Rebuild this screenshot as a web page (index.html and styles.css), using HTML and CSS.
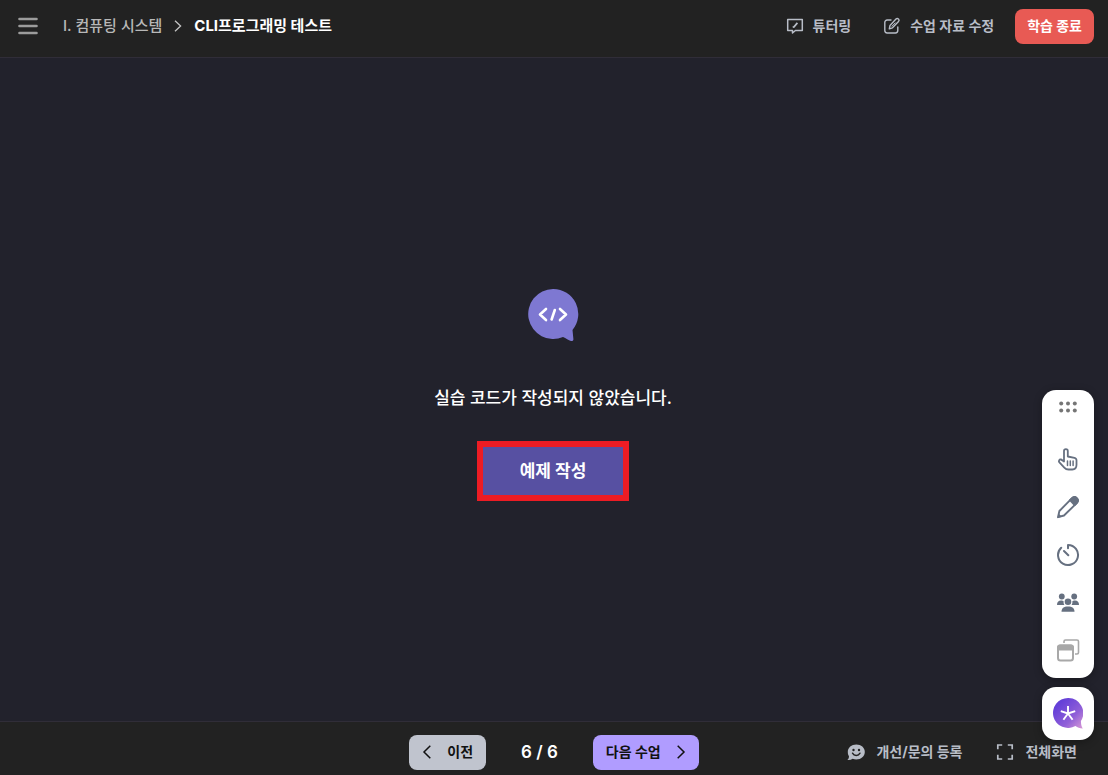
FILE: index.html
```
<!DOCTYPE html>
<html lang="ko">
<head>
    <meta charset="UTF-8">
    <meta name="viewport" content="width=device-width, initial-scale=1.0">
    <title>CLI프로그래밍 테스트</title>
    <link rel="stylesheet" href="styles.css">
</head>
<body>
    <header class="header">
        <button class="menu" aria-label="메뉴">
            <svg width="20" height="18" viewBox="0 0 20 18" fill="none" stroke="#9c9c9c" stroke-width="2.6" stroke-linecap="round"><path d="M1.5 2h17M1.5 9h17M1.5 16h17"/></svg>
        </button>
        <nav class="breadcrumb">
            <a class="chapter" href="#">I. 컴퓨팅 시스템</a>
            <svg width="8" height="12" viewBox="0 0 8 12" fill="none" stroke="#c4c4c4" stroke-width="1.3"><path d="M1 .7 6.6 6 1 11.3"/></svg>
            <span class="title">CLI프로그래밍 테스트</span>
        </nav>
        <div class="header-actions">
            <button class="text-button">
                <svg width="18" height="18" viewBox="0 0 18 18" fill="none" stroke="currentColor" stroke-width="1.5" stroke-linejoin="round"><path d="M1.7 2.5h14.6v11H9.4L6.5 16v-2.5H1.7z"/><path d="M6.700 10.300 8 9.900l3.400-4" stroke-width="1.7"/></svg>
                튜터링
            </button>
            <button class="text-button">
                <svg width="18" height="18" viewBox="0 0 18 18" fill="none" stroke="currentColor" stroke-width="1.4" stroke-linecap="round" stroke-linejoin="round"><path d="M8 3H4.200a2.400 2.400 0 0 0-2.400 2.400v8.200A2.400 2.400 0 0 0 4.200 16h8.200a2.400 2.400 0 0 0 2.400-2.400V10"/><path d="m6.300 11.800.7-3.400 6-6.300a1.700 1.700 0 0 1 2.500 0 1.700 1.700 0 0 1 0 2.400l-6 6.300z"/><path d="m9 9.200 3.200-3.300" stroke-width="1"/></svg>
                수업 자료 수정
            </button>
            <button class="finish">학습 종료</button>
        </div>
    </header>

    <main class="content">
        <svg class="code-icon" width="52" height="54" viewBox="0 0 52 54"><path fill="#7e78d2" d="M26 1a25 25 0 1 0 10 48c3 1.400 5.500 3.200 8 4 1.500.4 2.500-.5 2.400-2L45.500 42A25 25 0 0 0 26 1z"/><path d="m19 21-6 5.500 6 5.500M33 21l6 5.500-6 5.500M27.800 22l-3.200 9.500" fill="none" stroke="#fff" stroke-width="2.600" stroke-linecap="round" stroke-linejoin="round"/></svg>
        <p class="message">실습 코드가 작성되지 않았습니다.</p>
        <button class="create">예제 작성</button>
    </main>

    <footer class="footer">
        <div class="pager">
            <button class="prev">
                <svg width="10" height="14" viewBox="0 0 10 14" fill="none" stroke="currentColor" stroke-width="1.5"><path d="M8.300.8 2 7l6.300 6.200"/></svg>
                이전
            </button>
            <span class="page">6 / 6</span>
            <button class="next">
                다음 수업
                <svg width="10" height="14" viewBox="0 0 10 14" fill="none" stroke="currentColor" stroke-width="1.5"><path d="M1.700.8 8 7l-6.300 6.200"/></svg>
            </button>
        </div>
        <div class="footer-actions">
            <button class="text-button">
                <svg width="18" height="18" viewBox="0 0 18 18"><path fill="currentColor" d="M9.300 1.500c4.800 0 8.500 3.200 8.500 7.400s-3.700 7.500-8.500 7.500c-1.300 0-2.500-.2-3.600-.7-1.500 1-3.300 1.400-5.300 1.200 1-.9 1.500-2 1.600-3.500A6.700 6.700 0 0 1 .8 8.900c0-4.200 3.700-7.400 8.500-7.400z"/><circle cx="6.500" cy="7" r="1.200" fill="#222"/><circle cx="12" cy="7" r="1.200" fill="#222"/><path d="M5.500 10.200c1.600 3 5.900 3 7.500 0" fill="none" stroke="#222" stroke-width="1.400" stroke-linecap="round"/></svg>
                개선/문의 등록
            </button>
            <button class="text-button">
                <svg width="18" height="18" viewBox="0 0 18 18" fill="none" stroke="currentColor" stroke-width="1.700"><path d="M1.800 6.200V2h4.400M11.800 2h4.400v4.200M16.200 11.800V16h-4.400M6.200 16H1.800v-4.200"/></svg>
                전체화면
            </button>
        </div>
    </footer>

    <aside class="floating">
        <div class="toolbar">
            <button class="drag" aria-label="이동">
                <svg width="18" height="12" viewBox="0 0 18 12" fill="#757575"><circle cx="2.200" cy="2.500" r="2"/><circle cx="9" cy="2.500" r="2"/><circle cx="15.800" cy="2.500" r="2"/><circle cx="2.200" cy="9.500" r="2"/><circle cx="9" cy="9.500" r="2"/><circle cx="15.800" cy="9.500" r="2"/></svg>
            </button>
            <button class="tool" aria-label="포인터">
                <svg width="24" height="24" viewBox="0 0 24 24" fill="none" stroke="currentColor" stroke-width="1.800" stroke-linejoin="round" stroke-linecap="round"><path d="M8 14.500V4a1.900 1.900 0 0 1 3.800 0v5.500l6.700 1.300c1.300.3 2 1.200 2 2.500v4.500c0 2.800-1.400 4.700-4.200 4.700h-3.800c-1.800 0-3-.6-4.200-1.900L3.200 15.200c-.8-1 .1-3 1.600-2.700.9.200 1.500.9 3.200 2z"/><path d="M11.500 14v4.500M14.300 14v4.500M17.100 14v4.500" stroke-width="1.500"/></svg>
            </button>
            <button class="tool" aria-label="펜">
                <svg width="24" height="24" viewBox="0 0 24 24" fill="none" stroke="currentColor" stroke-width="1.900" stroke-linejoin="round"><path d="M2 22.200 3.400 16 15.800 3.300c3.300-3.400 8.200 1.300 4.900 4.800L8 20.500z"/><path fill="currentColor" d="m14 5.200 1.800-1.900c3.300-3.400 8.200 1.300 4.900 4.800l-2 1.900z"/><path fill="currentColor" stroke="none" d="m1.500 23 1-4.500L6 21.700z"/></svg>
            </button>
            <button class="tool" aria-label="타이머">
                <svg width="24" height="24" viewBox="0 0 24 24" fill="none" stroke="currentColor" stroke-width="2" stroke-linecap="round" stroke-linejoin="round"><path d="M12 5.200V2a10 10 0 1 1-6.800 2.700M8 8l4.300 4.300"/></svg>
            </button>
            <button class="tool" aria-label="모둠">
                <svg width="24" height="24" viewBox="0 0 24 24" fill="currentColor"><circle cx="5.800" cy="5.500" r="2.900"/><circle cx="18.200" cy="5.500" r="2.900"/><path d="M1 14c0-3 1.400-4.500 4-4.500 1.300 0 2.200.4 2.700 1-.3 1.300 0 2.500.8 3.500zM23 14c0-3-1.400-4.500-4-4.500-1.300 0-2.200.4-2.700 1 .3 1.300 0 2.500-.8 3.500z"/><circle cx="12" cy="10.800" r="3.300"/><path d="M5.500 20.800c0-3.500 2.200-5.300 6.500-5.300s6.500 1.800 6.500 5.300z"/></svg>
            </button>
            <button class="tool window" aria-label="창">
                <svg width="24" height="24" viewBox="0 0 24 24" fill="none" stroke="currentColor" stroke-width="2"><path d="M8 4V2.500A1.500 1.500 0 0 1 9.500 1H21a1.500 1.500 0 0 1 1.500 1.500v11A1.500 1.500 0 0 1 21 15h-2" stroke-width="1.600"/><rect x="2" y="6.500" width="15" height="15" rx="2.500"/><path fill="currentColor" stroke="none" d="M1 11.500V8.500a3 3 0 0 1 3-3h11a3 3 0 0 1 3 3v3z"/></svg>
            </button>
        </div>
        <button class="assistant" aria-label="도우미">
            <svg width="30" height="32" viewBox="0 0 30 32"><defs><linearGradient id="bubble" x1="0" y1="0" x2="1" y2="1"><stop offset=".2" stop-color="#6540d8"/><stop offset=".65" stop-color="#9160d8"/><stop offset="1" stop-color="#d99ad6"/></linearGradient></defs><path fill="url(#bubble)" d="M15 0a15 15 0 1 0 7.500 28c2 1.500 4.500 2.600 7.300 2.500-1-1.500-1.800-3.500-1.900-7.500A15 15 0 0 0 15 0z"/><path d="M15 8v7.500M15 15.500l-7.200-2.300M15 15.500l7.200-2.300M15 15.500l-4.600 6.300M15 15.500l4.600 6.300" stroke="#fff" stroke-width="1.900"/></svg>
        </button>
    </aside>
</body>
</html>
```
FILE: styles.css
```
* {
    box-sizing: border-box;
}

body {
    display: flex;
    flex-direction: column;
    min-height: 100vh;
    margin: 0;
    background-color: #22222c;
    color: #fff;
    font-family: Inter, "Noto Sans CJK KR", sans-serif;
    font-size: 14px;
    line-height: 20px;
}

button {
    display: flex;
    align-items: center;
    justify-content: center;
    padding: 0;
    border: none;
    background: none;
    color: inherit;
    font: inherit;
    white-space: nowrap;
    cursor: pointer;
}

svg {
    display: block;
    flex: none;
}

.header {
    display: flex;
    align-items: center;
    height: 58px;
    padding: 0 14px 5px 18px;
    background-color: #222;
    border-bottom: 1px solid #302d38;
}

.breadcrumb {
    display: flex;
    align-items: center;
    gap: 12px;
    margin-left: 25px;
    font-size: 15px;
}

.chapter {
    color: #b8b8b8;
    font-weight: 500;
    text-decoration: none;
}

.title {
    font-weight: 700;
}

.header-actions {
    display: flex;
    align-items: center;
    gap: 32px;
    margin-left: auto;
}

.text-button {
    gap: 9px;
    color: #b8bdc7;
    font-weight: 700;
}

.finish {
    height: 35px;
    margin-left: -11px;
    padding: 0 12px;
    border-radius: 8px;
    background-color: #e85a54;
    font-weight: 700;
}

.content {
    display: flex;
    flex: 1;
    flex-direction: column;
    align-items: center;
    justify-content: center;
    padding: 10px 2px 0 0;
}

.message {
    margin: 44px 0 31px;
    font-size: 17px;
    font-weight: 500;
    line-height: 24px;
}

.create {
    height: 60px;
    padding: 0 37px;
    border: 6px solid #ed1c24;
    background-color: #5750a2;
    font-size: 17px;
    font-weight: 700;
}

.footer {
    display: grid;
    grid-template-columns: 1fr auto 1fr;
    align-items: center;
    height: 54px;
    padding: 8px 31px 0;
    background-color: #222;
    border-top: 1px solid #302d38;
}

.pager {
    display: flex;
    grid-column: 2;
    align-items: center;
    gap: 35px;
}

.prev,
.next {
    gap: 15px;
    height: 35px;
    padding: 0 13px 2px;
    border-radius: 8px;
    color: #111;
    font-weight: 700;
}

.prev {
    background-color: #c0c4ce;
}

.next {
    background-color: #b09cff;
}

.page {
    padding-bottom: 2px;
    font-size: 17px;
    font-weight: 600;
}

.footer-actions {
    display: flex;
    justify-content: flex-end;
    gap: 34px;
    padding-bottom: 2px;
}

.footer-actions .text-button {
    gap: 11px;
}

.floating {
    position: absolute;
    right: 14px;
    bottom: 35px;
    display: flex;
    flex-direction: column;
    gap: 9px;
    width: 52px;
}

.toolbar,
.assistant {
    border-radius: 14px;
    background-color: #fff;
    box-shadow: 0 2px 8px rgba(0, 0, 0, 0.3);
}

.toolbar {
    padding: 11px 0 3px;
}

.drag,
.tool {
    width: 100%;
}

.drag {
    margin-bottom: 22px;
}

.tool {
    height: 48px;
    color: #667080;
}

.window {
    color: #a8a8a8;
}

.assistant {
    height: 53px;
}
```
